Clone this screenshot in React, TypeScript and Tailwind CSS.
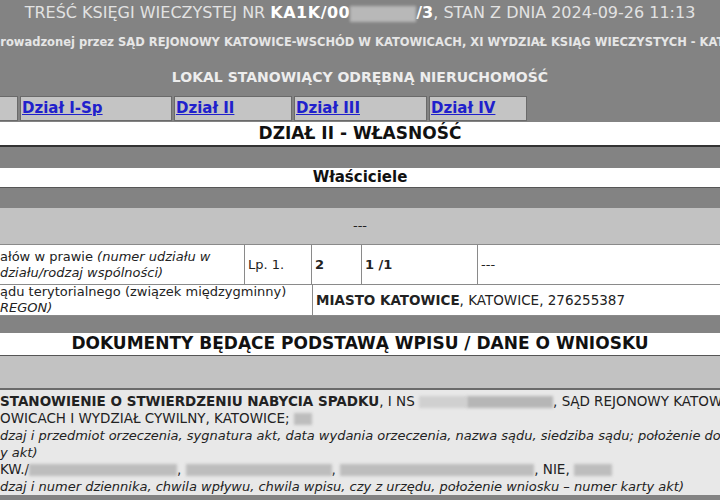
import React from "react";

function Blur({ w, h = 12, tone = "bg-[#bdbdbd]" }: { w: number; h?: number; tone?: string }) {
  return (
    <span
      className={`inline-block align-middle blur-[1.5px] ${tone}`}
      style={{ width: w, height: h }}
    />
  );
}

export default function App() {
  return (
    <div className="w-[720px] h-[500px] overflow-hidden bg-[#838383] font-['DejaVu_Sans',sans-serif] text-[#1e1e1e]">
      {/* title */}
      <div className="h-[28px] leading-[26px] text-center whitespace-nowrap text-[16px] text-[#e2e2e2]">
        TREŚĆ KSIĘGI WIECZYSTEJ NR <span className="font-bold text-white tracking-[0.5px]">KA1K/00</span>
        <Blur w={66} h={16} tone="bg-[#b8b8b8]" />
        <span className="font-bold text-white">/3</span>, STAN Z DNIA 2024-09-26 11:13
      </div>
      {/* court */}
      <div className="h-[30px] flex items-center whitespace-nowrap text-[11.5px] font-bold text-[#e6e6e6]">
        <span className="ml-[-8px]">
          prowadzonej przez SĄD REJONOWY KATOWICE-WSCHÓD W KATOWICACH, XI WYDZIAŁ KSIĄG WIECZYSTYCH - KATOWICE
        </span>
      </div>
      {/* type */}
      <div className="h-[38px] flex items-center justify-center whitespace-nowrap text-[14px] font-bold text-[#ededed]">
        LOKAL STANOWIĄCY ODRĘBNĄ NIERUCHOMOŚĆ
      </div>
      {/* tabs */}
      <div className="flex h-[25px] gap-[2px] text-[15px] font-bold">
        <div className="w-[18px] bg-[#c4c4c4] border border-l-0 border-[#6a6a6a]" />
        <div className="w-[152px] bg-[#c4c4c4] border border-[#6a6a6a] pl-[1px] flex items-center">
          <a className="text-[#2020cc] underline">Dział I-Sp</a>
        </div>
        <div className="w-[118px] bg-[#c4c4c4] border border-[#6a6a6a] pl-[1px] flex items-center">
          <a className="text-[#2020cc] underline">Dział II</a>
        </div>
        <div className="w-[133px] bg-[#c4c4c4] border border-[#6a6a6a] pl-[1px] flex items-center">
          <a className="text-[#2020cc] underline">Dział III</a>
        </div>
        <div className="w-[98px] bg-[#c4c4c4] border border-[#6a6a6a] pl-[1px] flex items-center">
          <a className="text-[#2020cc] underline">Dział IV</a>
        </div>
      </div>
      {/* section title */}
      <div className="mt-[1px] h-[25px] bg-white border-b-2 border-[#333] flex items-center justify-center text-[17px] font-bold text-[#111]">
        DZIAŁ II - WŁASNOŚĆ
      </div>
      <div className="h-[21px]" />
      <div className="h-[20px] bg-white border-b border-[#555] flex items-center justify-center text-[15px] font-bold text-[#111]">
        Właściciele
      </div>
      <div className="h-[20px]" />
      <div className="h-[36px] bg-[#c2c2c2] flex items-center justify-center text-[13px] text-[#222]">
        ---
      </div>
      {/* table */}
      <div className="text-[13px] leading-[16px] text-[#222]">
        <div className="flex h-[40px] bg-white border-t border-[#8a8a8a]">
          <div className="w-[245px] border-r border-[#8a8a8a] flex flex-col justify-center whitespace-nowrap overflow-hidden">
            <span>ałów w prawie <i>(numer udziału w</i></span>
            <i>działu/rodzaj wspólności)</i>
          </div>
          <div className="w-[67px] border-r border-[#8a8a8a] pl-[3px] flex items-center">Lp. 1.</div>
          <div className="w-[50px] border-r border-[#8a8a8a] pl-[3px] flex items-center font-bold">2</div>
          <div className="w-[116px] border-r border-[#8a8a8a] pl-[3px] flex items-center font-bold">1 /1</div>
          <div className="flex-1 pl-[3px] flex items-center">---</div>
        </div>
        <div className="flex h-[32px] bg-white border-t border-[#8a8a8a] border-b">
          <div className="w-[313px] border-r border-[#8a8a8a] flex flex-col justify-center whitespace-nowrap overflow-hidden">
            <span>ądu terytorialnego (związek międzygminny)</span>
            <i>REGON)</i>
          </div>
          <div className="flex-1 pl-[3px] flex items-center whitespace-nowrap text-[13.5px]">
            <b>MIASTO KATOWICE</b>, KATOWICE, 276255387
          </div>
        </div>
      </div>
      <div className="h-[17px]" />
      <div className="h-[23px] bg-white border-b border-[#555] flex items-center justify-center text-[17px] font-bold text-[#111] whitespace-nowrap">
        DOKUMENTY BĘDĄCE PODSTAWĄ WPISU / DANE O WNIOSKU
      </div>
      <div className="h-[34px] bg-[#c2c2c2] border-b-2 border-[#6a6a6a]" />
      {/* documents */}
      <div className="h-[105px] bg-[#e8e8e8] pt-[3px] text-[13.5px] leading-[17px] text-[#222] whitespace-nowrap overflow-hidden">
        <div>
          <b>STANOWIENIE O STWIERDZENIU NABYCIA SPADKU</b>, I NS{" "}
          <Blur w={48} tone="bg-[#d0d0d0]" />
          <Blur w={86} tone="bg-[#b6b6b6]" />, SĄD REJONOWY KATOWICE-WSCHÓD
        </div>
        <div>
          OWICACH I WYDZIAŁ CYWILNY, KATOWICE; <Blur w={18} />
        </div>
        <div className="text-[13px]">
          <i>dzaj i przedmiot orzeczenia, sygnatura akt, data wydania orzeczenia, nazwa sądu, siedziba sądu; położenie dokumentu</i>
        </div>
        <div className="text-[13px]">
          <i>y akt)</i>
        </div>
        <div>
          KW./<Blur w={148} />, <Blur w={146} />, <Blur w={194} />, NIE, <Blur w={38} />
        </div>
        <div className="text-[13px]">
          <i>dzaj i numer dziennika, chwila wpływu, chwila wpisu, czy z urzędu, położenie wniosku – numer karty akt)</i>
        </div>
      </div>
    </div>
  );
}
